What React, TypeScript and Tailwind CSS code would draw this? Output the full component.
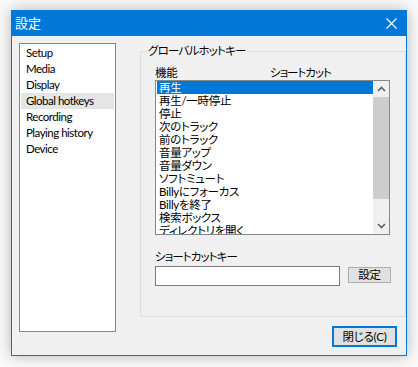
const MENU = ['Setup', 'Media', 'Display', 'Global hotkeys', 'Recording', 'Playing history', 'Device'];

const HOTKEYS = [
  '再生', '再生/一時停止', '停止', '次のトラック', '前のトラック', '音量アップ',
  '音量ダウン', 'ソフトミュート', 'Billyにフォーカス', 'Billyを終了', '検索ボックス', 'ディレクトリを開く',
];

const font = "font-['Lato','Noto_Sans_CJK_JP',sans-serif] [font-feature-settings:'palt']";

function Chevron({ down }: { down?: boolean }) {
  return (
    <svg width="9" height="6" viewBox="0 0 9 6" className={down ? 'rotate-180' : ''}>
      <path d="M1 5 L4.5 1.5 L8 5" fill="none" stroke="#606060" strokeWidth="1.6" />
    </svg>
  );
}

export default function App() {
  return (
    <div className={`w-[418px] h-[367px] bg-[#fafafa] pl-[11px] pt-[10px] text-[12px] text-black ${font}`}>
      <div className="w-[396px] h-[346px] border border-[#0078d7] bg-[#f0f0f0] shadow-[0_0_14px_rgba(0,0,0,0.28)] flex flex-col">
        {/* Title bar */}
        <div className="h-[25px] shrink-0 bg-[#0078d7] flex items-center justify-between pl-[3px] pr-[9px] text-white">
          <span className="text-[13px] leading-none">設定</span>
          <svg width="11" height="11" viewBox="0 0 11 11">
            <path d="M0.5 0.5 L10.5 10.5 M10.5 0.5 L0.5 10.5" stroke="white" strokeWidth="1.1" />
          </svg>
        </div>

        <div className="flex">
          {/* Left menu */}
          <div className="ml-[7px] mt-[7px] w-[97px] h-[289px] border border-[#828790] bg-white pt-px px-px text-[11.5px] tracking-[-0.5px]">
            {MENU.map((m) => (
              <div key={m} className={`h-[16px] leading-[16px] pl-[5px] ${m === 'Global hotkeys' ? 'bg-[#e5e5e5]' : ''}`}>
                {m}
              </div>
            ))}
          </div>

          <div className="ml-[24px] flex flex-col">
            {/* Group box */}
            <fieldset className="mt-[7px] w-[266px] h-[274px] border border-[#dcdcdc]">
              <legend className="ml-[6px] px-px leading-[16px] text-[11.5px] tracking-[-0.8px]">グローバルホットキー</legend>
              <div className="pl-[14px] text-[11.5px] tracking-[-0.3px]">
                <div className="mt-[6px] h-[15px] flex items-center">
                  <span className="w-[115px]">機能</span>
                  <span className="tracking-[-1px]">ショートカット</span>
                </div>
                <div className="w-[235px] h-[155px] border border-[#828790] bg-white flex">
                  <div className="flex-1 pl-px overflow-hidden">
                    {HOTKEYS.map((h, i) => (
                      <div key={h} className={`h-[13px] leading-[13px] pl-[2px] whitespace-nowrap ${i === 0 ? 'bg-[#0078d7] text-white' : ''}`}>
                        {h}
                      </div>
                    ))}
                  </div>
                  <div className="w-[16px] bg-[#f0f0f0] flex flex-col">
                    <div className="h-[16px] flex items-center justify-center"><Chevron /></div>
                    <div className="h-[102px] bg-[#cdcdcd]" />
                    <div className="flex-1" />
                    <div className="h-[16px] flex items-center justify-center"><Chevron down /></div>
                  </div>
                </div>
                <div className="mt-[15px] h-[13px] leading-[13px] tracking-[-0.9px]">ショートカットキー</div>
                <div className="mt-[3px] flex items-start">
                  <div className="w-[185px] h-[20px] border border-[#7a7a7a] bg-white" />
                  <button className="ml-[8px] mt-px w-[43px] h-[16px] border border-[#adadad] bg-[#e1e1e1] leading-none text-[11.5px]">
                    設定
                  </button>
                </div>
              </div>
            </fieldset>

            <div className="flex justify-end pr-[9px] mt-[9px]">
              <button className="w-[65px] h-[21px] border-2 border-[#0078d7] bg-[#e1e1e1] text-[11.5px] leading-none tracking-[-0.3px]">
                閉じる(C)
              </button>
            </div>
          </div>
        </div>
      </div>
    </div>
  );
}
